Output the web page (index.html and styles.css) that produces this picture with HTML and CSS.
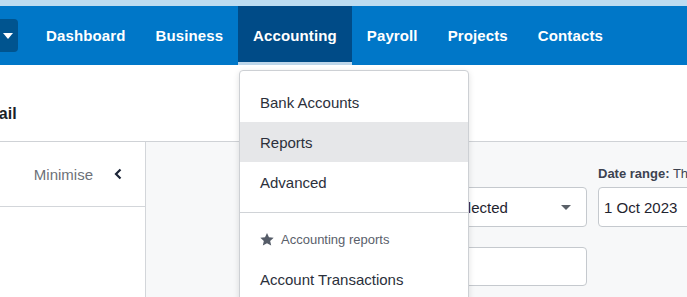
FILE: index.html
```html
<!DOCTYPE html>
<html>
<head>
<meta charset="utf-8">
<link rel="stylesheet" href="styles.css">
</head>
<body>
<div class="topstrip"></div>
<nav class="nav">
  <div class="menu-btn"><svg width="10" height="6" viewBox="0 0 10 6"><path d="M0 0h10L5 6z" fill="#fff"/></svg></div>
  <ul class="nav-list">
    <li class="nav-item">Dashboard</li>
    <li class="nav-item">Business</li>
    <li class="nav-item active">Accounting</li>
    <li class="nav-item">Payroll</li>
    <li class="nav-item">Projects</li>
    <li class="nav-item">Contacts</li>
  </ul>
</nav>
<header class="page-head"><h1 class="title">Detail</h1></header>
<div class="body-row">
  <aside class="side">
    <div class="minimise"><span class="min-text">Minimise</span><svg class="chev" width="8" height="12" viewBox="0 0 8 12"><path d="M6.5 1.5L2 6l4.5 4.5" fill="none" stroke="#1b2437" stroke-width="2.2"/></svg></div>
  </aside>
  <main class="main">
    <div class="col col1">
      <div class="label">Contact</div>
      <div class="field select"><span>None selected</span><svg width="10" height="5" viewBox="0 0 10 5"><path d="M0 0h10L5 5z" fill="#5a6068"/></svg></div>
      <div class="field gap"></div>
    </div>
    <div class="col col2">
      <div class="label"><b>Date range:</b> This month</div>
      <div class="field"><span>1 Oct 2023</span></div>
    </div>
  </main>
</div>
<div class="dropdown">
  <div class="dd-item">Bank Accounts</div>
  <div class="dd-item hover">Reports</div>
  <div class="dd-item">Advanced</div>
  <div class="dd-sep"></div>
  <div class="dd-head"><svg width="14" height="13" viewBox="0 0 24 23"><path d="M12 0l3.5 7.6 8.3.9-6.2 5.6 1.8 8.2L12 18.1l-7.4 4.2 1.8-8.2L.2 8.5l8.3-.9z" fill="#555c68"/></svg><span>Accounting reports</span></div>
  <div class="dd-item">Account Transactions</div>
</div>
</body>
</html>
```
FILE: styles.css
```css
html, body { margin: 0; padding: 0; }
body {
  width: 687px; height: 297px; overflow: hidden; position: relative;
  font-family: "Liberation Sans", Arial, sans-serif; background: #fff;
}
.topstrip { height: 6px; background: #bcdcf1; }
.nav {
  height: 59px; background: #0077c8; display: flex; align-items: stretch;
}
.menu-btn {
  width: 30px; margin-left: -12px; margin-top: 13px; height: 33px;
  background: #00548f; border-radius: 4px; display: flex; align-items: center;
  justify-content: flex-end; padding-right: 5px; box-sizing: border-box;
}
.nav-list { list-style: none; margin: 0 0 0 13px; padding: 0; display: flex; }
.nav-item {
  padding: 0 15px; color: #fff; font-weight: bold; font-size: 15px; letter-spacing: 0.12px;
  display: flex; align-items: center; height: 59px; box-sizing: border-box;
}
.nav-item.active {
  background: #004b87; border-bottom: 3px solid #bdd6ea; padding-top: 3px;
}
.page-head {
  height: 77px; border-bottom: 1px solid #cfd2d6; box-sizing: border-box;
  display: flex; align-items: center;
}
.title { margin: 0 0 0 -27px; font-size: 16px; font-weight: bold; color: #1b1f27; padding-top: 22px; }
.body-row { display: flex; height: 155px; }
.side { width: 145px; border-right: 1px solid #d3d6da; flex: none; background: #fff; }
.minimise {
  height: 65px; border-bottom: 1px solid #d3d6da; box-sizing: border-box;
  display: flex; align-items: center; justify-content: flex-end; padding-right: 23px;
}
.min-text { color: #6d7178; font-size: 15px; margin-right: 21px; }
.main {
  flex: 1; background: #f7f8f9; display: flex; gap: 11px; padding: 24px 0 0 254px;
}
.col { display: flex; flex-direction: column; }
.col1 { width: 187px; flex: none; }
.col2 { width: 200px; flex: none; }
.label { font-size: 13px; color: #3d4350; line-height: 15px; margin-bottom: 6px; white-space: nowrap; }
.label b { font-weight: bold; }
.field {
  height: 40px; background: #fff; border: 1px solid #c5c9ce; border-radius: 4px;
  box-sizing: border-box; display: flex; align-items: center; padding: 0 15px 0 11px;
  font-size: 15px; color: #1f2430; justify-content: space-between; flex: none;
}
.field.gap { margin-top: 20px; height: 39px; }
.col2 .field { padding-left: 5px; }
.dropdown {
  position: absolute; left: 239px; top: 70px; width: 230px; height: 240px;
  background: #fff; border: 1px solid #cdd0d4; border-radius: 4px; box-sizing: border-box;
  box-shadow: 0 2px 6px rgba(0,0,0,0.12); padding-top: 11px;
}
.dd-item {
  height: 40px; display: flex; align-items: center; padding-left: 20px;
  font-size: 15px; color: #2b303b;
}
.dd-item.hover { background: #e6e7e9; }
.dd-sep { height: 1px; background: #d0d3d7; margin-top: 10px; }
.dd-head {
  height: 46px; display: flex; align-items: center; padding-left: 20px; gap: 7px;
  font-size: 13px; color: #5a606b; padding-top: 6px; box-sizing: border-box;
}
```
